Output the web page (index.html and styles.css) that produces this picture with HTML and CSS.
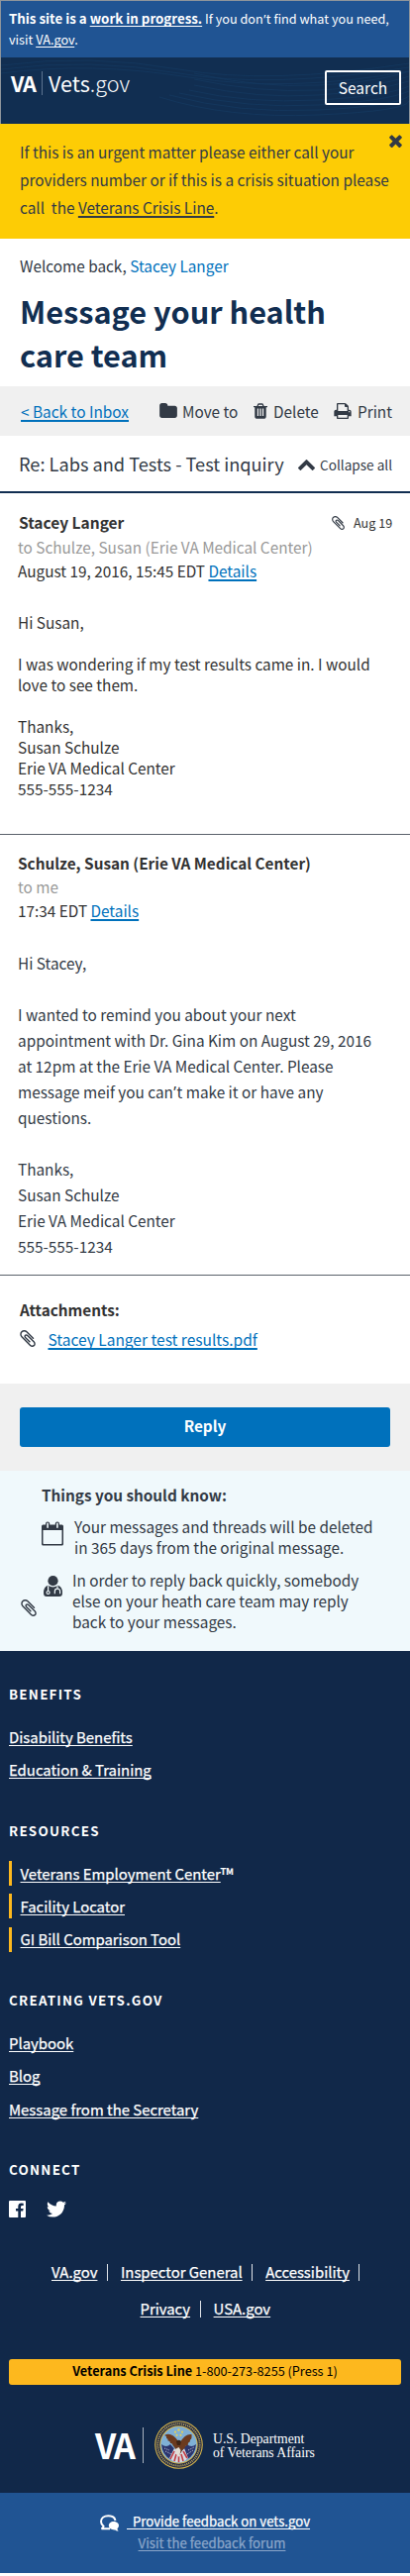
FILE: index.html
```
<!DOCTYPE html>
<html lang="en">
<head>
<meta charset="utf-8">
<title>Vets.gov - Message your health care team</title>
<link rel="stylesheet" href="styles.css">
</head>
<body>
<svg width="0" height="0" class="defs">
  <symbol id="clip" viewBox="196 128 1400 1532"><path d="M1596 1385q0 117-79 196t-196 79q-135 0-235-100l-777-776q-113-115-113-271 0-159 110-270t269-111q158 0 273 113l605 606q10 10 10 22 0 16-30.500 46.500t-46.500 30.500q-13 0-23-10l-606-607q-79-77-181-77-106 0-179 75t-73 181q0 105 76 181l776 777q63 63 145 63 64 0 106-42t42-106q0-82-63-145l-581-581q-26-24-60-24-29 0-48 19t-19 48q0 32 25 59l410 410q10 10 10 22 0 16-31 47t-47 31q-12 0-22-10l-410-410q-63-61-63-149 0-82 57-139t139-57q88 0 149 63l581 581q100 98 100 235z"/></symbol>
</svg>

<div class="top">
  <div class="notice"><p><b>This site is a <u>work in progress.</u></b> If you don<span class="apos">’</span>t find what you need,</p><p>visit <u>VA.gov</u>.</p></div>
  <header class="masthead">
    <svg class="waves" viewBox="0 0 412 67" preserveAspectRatio="none"><g fill="none" stroke="#14385f" stroke-width=".8"><path d="M0 8Q90-4 180 12T412 6M0 12Q90 0 180 16T412 10M0 16Q90 4 190 20T412 14"/><path d="M160 40Q230 62 320 58T412 44M170 38Q240 57 320 53T412 39M180 36Q250 52 320 48T412 34M190 33Q250 47 320 43T412 29M195 28Q260 42 320 38T412 24M195 22Q260 36 320 33T412 19M195 16Q260 31 320 28T412 14"/></g></svg>
    <div class="logo"><b class="logo-va">VA</b><i class="logo-bar"></i><span class="logo-vets"><b>Vets</b>.gov</span></div>
    <div class="search">Search</div>
  </header>
</div>

<section class="alert">
  <p>If this is an urgent matter please either call your<br>providers number or if this is a crisis situation please<br>call &nbsp;the <u>Veterans Crisis Line</u>.</p>
  <svg class="close" viewBox="302 238 1188 1316"><path d="M1490 1322q0 40-28 68l-136 136q-28 28-68 28t-68-28l-294-294-294 294q-28 28-68 28t-68-28l-136-136q-28-28-28-68t28-68l294-294-294-294q-28-28-28-68t28-68l136-136q28-28 68-28t68 28l294 294 294-294q28-28 68-28t68 28l136 136q28 28 28 68t-28 68l-294 294 294 294q28 28 28 68z"/></svg>
</section>

<section class="intro">
  <p>Welcome back, <span class="blue">Stacey Langer</span></p>
  <h1>Message your health<br>care team</h1>
</section>

<nav class="toolbar">
  <a class="link back">&lt; Back to Inbox</a>
  <svg class="i-folder" viewBox="64 128 1664 1408"><path d="M1728 608v704q0 92-66 158t-158 66h-1216q-92 0-158-66t-66-158v-960q0-92 66-158t158-66h320q92 0 158 66t66 158v32h672q92 0 158 66t66 158z"/></svg>
  <span class="t-move">Move to</span>
  <svg class="i-trash" viewBox="192 128 1408 1536"><path d="M704 1376v-704q0-14-9-23t-23-9h-64q-14 0-23 9t-9 23v704q0 14 9 23t23 9h64q14 0 23-9t9-23zm256 0v-704q0-14-9-23t-23-9h-64q-14 0-23 9t-9 23v704q0 14 9 23t23 9h64q14 0 23-9t9-23zm256 0v-704q0-14-9-23t-23-9h-64q-14 0-23 9t-9 23v704q0 14 9 23t23 9h64q14 0 23-9t9-23zm-544-992h448l-48-117q-7-9-17-11h-317q-10 2-17 11zm928 32v64q0 14-9 23t-23 9h-96v948q0 83-47 143.500t-113 60.500h-832q-66 0-113-58.500t-47-141.500v-952h-96q-14 0-23-9t-9-23v-64q0-14 9-23t23-9h309l70-167q15-37 54-63t79-26h320q40 0 79 26t54 63l70 167h309q14 0 23 9t9 23z"/></svg>
  <span class="t-delete">Delete</span>
  <svg class="i-print" viewBox="64 128 1664 1536"><path d="M448 1536h896v-256h-896v256zm0-640h896v-384h-160q-40 0-68-28t-28-68v-160h-640v640zm1152 64q0-26-19-45t-45-19-45 19-19 45 19 45 45 19 45-19 19-45zm128 0v416q0 13-9.500 22.500t-22.500 9.500h-224v160q0 40-28 68t-68 28h-960q-40 0-68-28t-28-68v-160h-224q-13 0-22.500-9.500t-9.500-22.500v-416q0-79 56.500-135.500t135.500-56.500h64v-544q0-40 28-68t68-28h672q40 0 88 20t76 48l152 152q28 28 48 76t20 88v256h64q79 0 135.500 56.500t56.500 135.500z"/></svg>
  <span>Print</span>
</nav>

<div class="subject">
  <h2>Re: Labs and Tests - Test inquiry</h2>
  <svg class="i-up" viewBox="90 480 1612 1035"><path d="M1683 1331l-166 165q-19 19-45 19t-45-19l-531-531-531 531q-19 19-45 19t-45-19l-166-165q-19-19-19-45.500t19-45.500l742-741q19-19 45-19t45 19l742 741q19 19 19 45.500t-19 45.500z"/></svg>
  <span class="collapse">Collapse all</span>
</div>

<article class="message first">
  <div class="meta">
    <div class="from"><b>Stacey Langer</b><svg class="clip-sm"><use href="#clip"/></svg><span class="date">Aug 19</span></div>
    <div class="to">to Schulze, Susan (Erie VA Medical Center)</div>
    <div>August 19, 2016, 15:45 EDT <a class="link">Details</a></div>
  </div>
  <div class="body">Hi Susan,<br><br>I was wondering if my test results came in. I would<br>love to see them.<br><br>Thanks,<br>Susan Schulze<br>Erie VA Medical Center<br>555-555-1234</div>
</article>

<article class="message second">
  <div class="meta">
    <div class="from"><b>Schulze, Susan (Erie VA Medical Center)</b></div>
    <div class="to">to me</div>
    <div>17:34 EDT <a class="link">Details</a></div>
  </div>
  <div class="body">Hi Stacey,<br><br>I wanted to remind you about your next<br>appointment with Dr. Gina Kim on August 29, 2016<br>at 12pm at the Erie VA Medical Center. Please<br>message meif you can<span class="apos">’</span>t make it or have any<br>questions.<br><br>Thanks,<br>Susan Schulze<br>Erie VA Medical Center<br>555-555-1234</div>
</article>

<section class="attachments">
  <h3>Attachments:</h3>
  <div class="file"><svg class="clip-md"><use href="#clip"/></svg><a class="link">Stacey Langer test results.pdf</a></div>
</section>

<div class="reply"><div class="button">Reply</div></div>

<section class="info">
  <h3>Things you should know:</h3>
  <div class="tip">
    <svg class="i-cal" viewBox="0 0 22 25"><path d="M1.500 3.500H20.500A1.500 1.500 0 0 1 22 5V23A1.500 1.500 0 0 1 20.500 24.500H1.500A1.500 1.500 0 0 1 0 23V5A1.500 1.500 0 0 1 1.500 3.500ZM1.500 9V22.300Q1.500 23 2.200 23H19.800Q20.500 23 20.500 22.300V9Z" fill-rule="evenodd"/><rect x="4" y=".6" width="4.200" height="7" rx="2"/><rect x="13.800" y=".6" width="4.200" height="7" rx="2"/><path d="M6.100 2.300V6.300M15.900 2.300V6.300" stroke="#f0f9fc" stroke-width="1.600" stroke-linecap="round"/></svg>
    <p>Your messages and threads will be deleted<br>in 365 days from the original message.</p>
  </div>
  <div class="tip doc">
    <svg class="clip-md"><use href="#clip"/></svg>
    <svg class="i-doc" viewBox="0 0 19 21"><circle cx="9.500" cy="5.200" r="5.100"/><path d="M4.500 9.800Q9.500 13 14.500 9.800Q19 11 19 17.500Q19 21 16 21H3Q0 21 0 17.500Q0 11 4.500 9.800Z"/><path d="M4.600 10.300V15.400M14 10.300V13.200M11.300 18.300V16Q11.300 13.200 14 13.200T16.600 16V18.300" fill="none" stroke="#f0f9fc" stroke-width="1.200"/><circle cx="4.600" cy="17" r="1.500" fill="none" stroke="#f0f9fc" stroke-width="1.200"/></svg>
    <p>In order to reply back quickly, somebody<br>else on your heath care team may reply<br>back to your messages.</p>
  </div>
</section>

<footer class="footer">
  <h4>Benefits</h4>
  <ul><li><a>Disability Benefits</a></li><li><a>Education &amp; Training</a></li></ul>
  <h4>Resources</h4>
  <ul class="marked"><li><a>Veterans Employment Center<span class="tm">™</span></a></li><li><a>Facility Locator</a></li><li><a>GI Bill Comparison Tool</a></li></ul>
  <h4>Creating Vets.gov</h4>
  <ul><li><a>Playbook</a></li><li><a>Blog</a></li><li><a>Message from the Secretary</a></li></ul>
  <h4>Connect</h4>
  <div class="social">
    <svg class="i-fb" viewBox="0 0 17 17"><path d="M1 0H16A1 1 0 0 1 17 1V16A1 1 0 0 1 16 17H12V10.500H14.200L14.600 8H12V6.300Q12 5.100 13.300 5.100H14.700V2.700Q13.700 2.500 12.700 2.500Q9.300 2.500 9.300 5.900V8H7V10.500H9.300V17H1A1 1 0 0 1 0 16V1A1 1 0 0 1 1 0Z"/></svg>
    <svg class="i-tw" viewBox="108 256 1576 1280"><path d="M1684 408q-67 98-162 167 1 14 1 42 0 130-38 259.500t-115.500 248.500-184.500 210.500-258 146-323 54.500q-271 0-496-145 35 4 78 4 225 0 401-138-105-2-188-64.500t-114-159.500q33 5 61 5 43 0 85-11-112-23-185.500-111.500t-73.500-205.500v-4q68 38 146 41-66-44-105-115t-39-154q0-88 44-163 121 149 294.500 238.500t371.500 99.500q-8-38-8-74 0-134 94.500-228.500t228.500-94.500q140 0 236 102 109-21 205-78-37 115-142 178 93-10 186-50z"/></svg>
  </div>
  <div class="legal"><a>VA.gov</a><i></i><a>Inspector General</a><i></i><a>Accessibility</a><i></i></div>
  <div class="legal second-row"><a>Privacy</a><i></i><a>USA.gov</a></div>
  <div class="crisis"><span><b>Veterans Crisis Line</b> 1-800-273-8255 (Press 1)</span></div>
  <div class="brand">
    <b>VA</b><i></i>
    <svg class="seal" viewBox="0 0 49 49">
      <circle cx="24.500" cy="24.500" r="24.300" fill="#d9b64a"/><circle cx="24.500" cy="24.500" r="23.200" fill="#1c2545"/>
      <circle cx="24.500" cy="24.500" r="21.200" fill="none" stroke="#b8a35a" stroke-width="2" stroke-dasharray="1.100 .9"/>
      <circle cx="24.500" cy="24.500" r="19.200" fill="#d9b64a"/><circle cx="24.500" cy="24.500" r="18.200" fill="#7fb0d6"/>
      <path d="M7 24Q12 28 16 24L24 33L33 24Q37 28 42 24Q41 35 33 39L24.500 42.500L16 39Q8 35 7 24Z" fill="#2b356d"/>
      <path d="M15 38L20 28L25 34L30 28L34 38Q30 42 24.500 42.500Q19 42 15 38Z" fill="#d8dbe2"/>
      <path d="M16 39L20 31M20 41L22 34M29 41L27 34M33 38L29 31M24.500 42V36" stroke="#c23d45" stroke-width="1.600"/>
      <path d="M11 31L17 34M33 34L39 30M10 28L15 30M34 30L40 27" stroke="#d5d9ea" stroke-width=".9" stroke-dasharray="1 1"/>
      <path d="M24 21Q17 11 10 15Q13 16 12 18Q14 18 13.500 20.500Q16 20 16 23Q18 22.500 18.500 25L23 31L24.500 36L28 30Q31 28 31.500 25.500Q34 26 34 22.500Q36 22.500 36 19.500Q38 19 37.500 14Q31 13 26 22Z" fill="#6b3a1f"/>
      <path d="M22 21Q24.500 18.500 27 21L26 25H23Z" fill="#3d2315"/><path d="M21 29L24.500 27L26.500 30L25 37L22 34Z" fill="#e5ded5"/>
      <g fill="#e6cf55"><circle cx="24.500" cy="9.500" r="1.200"/><circle cx="21" cy="11.700" r="1.100"/><circle cx="28" cy="11.700" r="1.100"/><circle cx="22.500" cy="14.800" r="1.100"/><circle cx="26.500" cy="14.800" r="1.100"/></g>
    </svg>
    <span class="dept">U.S. Department<br>of Veterans Affairs</span>
  </div>
</footer>
<div class="feedback">
  <div class="fb-row"><svg class="i-chat" viewBox="0 0 19 17"><path d="M10 14.200H1.500Q3.700 13 3.600 11.700Q1 9.800 1 6.900C1 3.500 4.200 1.200 8.300 1.200C12 1.200 15 3 15.500 6" fill="none" stroke="#fff" stroke-width="2"/><path d="M13.500 6.900C16.800 6.900 19 8.700 19 11.100Q19 13 17.400 14.200Q17.500 15.600 18.700 16.600Q16.700 16.600 15.200 15.400Q9.300 15.700 8.800 11.300C8.800 8.700 11 6.900 13.500 6.900Z" fill="#fff"/></svg><a>&nbsp; Provide feedback on vets.gov</a></div>
  <a class="forum">Visit the feedback forum</a>
</div>
</body>
</html>
```
FILE: styles.css
```
* { box-sizing: border-box; }
body { margin: 0; width: 414px; background: #fff; color: #323a45; font: 15.33px/24px "Noto Sans CJK SC", "Noto Sans", sans-serif; }
h1, h2, h3, h4, p, ul { margin: 0; padding: 0; }
ul { list-style: none; }
svg { display: block; flex: none; fill: #323a45; }
.defs { position: absolute; }
u, .link, footer a, .feedback a { text-decoration: underline; text-decoration-skip-ink: none; text-underline-offset: 2px; text-decoration-thickness: 1px; }
.link { color: #0071bc; text-decoration-thickness: 2px; text-underline-offset: 1.5px; }
.blue { color: #0071bc; }
.apos { font-family: "Noto Sans", sans-serif; line-height: 1; margin: 0 .03em; }

.top { height: 125px; border: solid #8e949b; border-width: 1px 1px 0; background: #112e51; }
.notice { height: 57px; padding: 7px 0 0 8px; background: #205493; color: #fff; font-size: 12.7px; line-height: 21.3px; white-space: nowrap; }
.notice b { font-size: 13.3px; }
.masthead { display: flex; justify-content: space-between; height: 67px; padding: 13px 8px 0 10px; position: relative; color: #fff; }
.waves { position: absolute; left: 0; top: 0; width: 412px; height: 67px; }
.logo { display: flex; position: relative; height: 26px; font-size: 21.6px; line-height: 26px; }
.logo-va { letter-spacing: -1px; width: 31px; }
.logo-bar { width: 1px; height: 24px; margin-top: 1px; background: #5d7490; }
.logo-vets { margin-left: 6px; font-weight: 300; }
.search { position: relative; width: 77px; height: 35px; border: 2px solid #fff; border-radius: 2px; text-align: center; font-size: 15.5px; line-height: 31px; }

.alert { display: flex; height: 116px; padding: 14.300px 9px 0 20px; background: #fdcc05; justify-content: space-between; line-height: 28px; white-space: nowrap; }
.alert u { text-decoration-thickness: 1.500px; }
.close { width: 13px; height: 14px; margin-top: -4px; }

.intro { height: 149px; padding: 15px 20px 0; }
h1 { margin-top: 12.400px; font-size: 30.700px; line-height: 44px; font-weight: 700; color: #112e51; }
.toolbar { display: flex; align-items: center; height: 50px; padding: 0 0 1px 21px; background: #f0f0f0; white-space: nowrap; }
.back { width: 140px; font-size: 15.400px; text-decoration: underline 2px; }
.i-folder { width: 18px; height: 15px; }
.t-move { margin-left: 5px; width: 72px; }
.i-trash { width: 14px; height: 16px; }
.t-delete { margin-left: 6px; width: 61px; }
.i-print { width: 18px; height: 16px; margin-right: 6px; }
.subject { display: flex; align-items: center; height: 58px; padding: 0 0 1px 19px; border-bottom: 2px solid #112e51; white-space: nowrap; }
h2 { width: 282px; font-size: 18.200px; font-weight: 400; }
.i-up { width: 17px; height: 11px; margin-top: 4px; }
.collapse { margin: 2px 0 0 5px; font-size: 13.600px; }

.message { padding-left: 18px; color: #323232; white-space: nowrap; border-bottom: 1px solid #5b616b; }
.first { height: 345px; padding-top: 16.500px; }
.second { height: 445px; padding-top: 16.300px; }
.from { display: flex; align-items: center; }
.to { color: #999; }
.first b { width: 316px; margin-left: 1px; font-size: 15.5px; }
.clip-sm { width: 13px; height: 14px; margin-top: 2px; }
.date { margin: 1px 0 0 9px; font-size: 12.600px; }
.first .body { margin-top: 30.500px; line-height: 21px; }
.second .body { margin-top: 28px; line-height: 26px; color: #323a45; }

.attachments { height: 109px; padding: 22.300px 20px 0; }
h3 { font-size: 15.300px; font-weight: 700; color: #323232; }
.file { display: flex; align-items: center; margin-top: 5.600px; gap: 12.500px; font-size: 15.500px; }
.clip-md { width: 16px; height: 17px; }
.reply { height: 88px; padding: 24px 20px; background: #f0f0f0; }
.button { height: 40px; line-height: 37px; border-radius: 3px; background: #0071bc; color: #fff; font-weight: 700; text-align: center; }
.info { height: 182px; padding: 12.300px 0 0 42px; background: #f0f9fc; line-height: 21px; white-space: nowrap; }
.info h3 { line-height: 24px; color: #323a45; }
.tip { display: flex; margin-top: 9.500px; }
.i-cal { width: 22px; height: 25px; margin: 5px 11px 0 0; }
.doc { margin: 12px 0 0 -21px; }
.doc .clip-md { margin: 30px 7px 0 0; }
.i-doc { width: 19px; height: 21px; margin: 6px 10px 0 0; }

.footer { height: 850px; padding: 33px 9px 0; background: #112849; color: #fff; font-size: 14.900px; }
.footer svg { fill: #fff; }
h4 { font-size: 13.400px; line-height: 20px; letter-spacing: 1.250px; text-transform: uppercase; }
.footer ul { margin: 17px 0 34.300px; line-height: 33.300px; }
.footer li { height: 33.300px; display: flex; align-items: center; }
.footer a { -webkit-text-stroke: .25px #fff; }
.tm { display: inline-block; font-size: 18px; line-height: 1; vertical-align: -2px; }
.marked li::before { content: ""; width: 3px; height: 25px; margin-right: 8.500px; background: #fdb81e; }
.social { display: flex; align-items: center; gap: 21px; height: 18px; margin-top: 21px; }
.i-fb { width: 17px; height: 17px; }
.i-tw { width: 20px; height: 17px; }
.legal { display: flex; align-items: center; height: 37px; margin: 36px 0 0 43px; line-height: 37px; }
.legal i { width: 1px; height: 17px; margin: 1px 13px 0 9.500px; background: #dfe3e8; }
.second-row { margin: 0 0 0 132.500px; }
.crisis { height: 26px; margin: 33px 0 36px; border-radius: 3px; background: #fdb81e; color: #000; font-size: 12.700px; line-height: 24px; text-align: center; }
.brand { display: flex; align-items: center; height: 49px; padding-left: 87px; }
.brand b { width: 48px; font: 700 34.500px/49px "Noto Sans CJK SC", sans-serif; letter-spacing: -2px; }
.brand i { width: 1px; height: 36px; background: #a9b3c0; }
.seal { width: 49px; height: 49px; margin: 0 10px 0 11px; }
.dept { margin-top: 2px; font: 13.700px/14px "Liberation Serif", serif; white-space: nowrap; }
.feedback { height: 81px; padding: 18px 0 0; background: #205493; color: #fff; font-size: 13.200px; line-height: 22px; text-align: center; }
.fb-row { display: flex; align-items: center; padding-left: 101px; }
.feedback a { -webkit-text-stroke: .25px; }
.i-chat { width: 19px; height: 17px; margin: 3px 8px 0 0; }
.forum { margin-left: 14px; color: #8ba6ca; }
```
